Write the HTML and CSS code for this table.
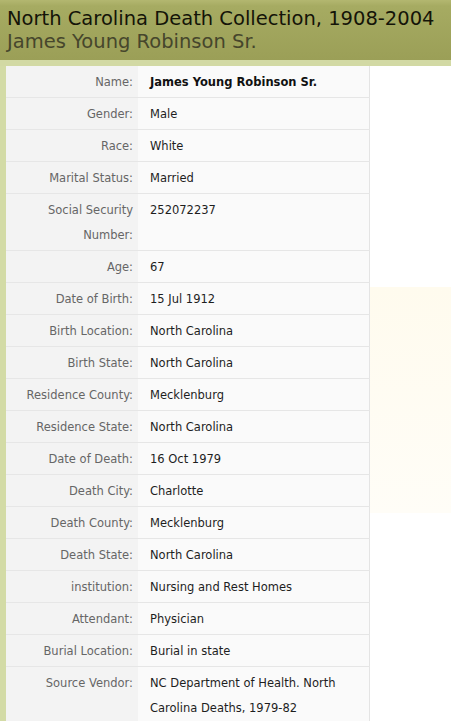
FILE: index.html
```html
<!DOCTYPE html>
<html>
<head>
<meta charset="utf-8">
<link rel="stylesheet" href="styles.css">
</head>
<body>
<header class="head">
  <h1 class="title">North Carolina Death Collection, 1908-2004</h1>
  <h2 class="subtitle">James Young Robinson Sr.</h2>
</header>
<div class="band"></div>
<div class="main">
  <table class="record">
    <tr><th>Name:</th><td class="strong">James Young Robinson Sr.</td></tr>
    <tr><th>Gender:</th><td>Male</td></tr>
    <tr><th>Race:</th><td>White</td></tr>
    <tr><th>Marital Status:</th><td>Married</td></tr>
    <tr><th>Social Security<br>Number:</th><td>252072237</td></tr>
    <tr><th>Age:</th><td>67</td></tr>
    <tr><th>Date of Birth:</th><td>15 Jul 1912</td></tr>
    <tr><th>Birth Location:</th><td>North Carolina</td></tr>
    <tr><th>Birth State:</th><td>North Carolina</td></tr>
    <tr><th>Residence County:</th><td>Mecklenburg</td></tr>
    <tr><th>Residence State:</th><td>North Carolina</td></tr>
    <tr><th>Date of Death:</th><td>16 Oct 1979</td></tr>
    <tr><th>Death City:</th><td>Charlotte</td></tr>
    <tr><th>Death County:</th><td>Mecklenburg</td></tr>
    <tr><th>Death State:</th><td>North Carolina</td></tr>
    <tr><th>institution:</th><td>Nursing and Rest Homes</td></tr>
    <tr><th>Attendant:</th><td>Physician</td></tr>
    <tr><th>Burial Location:</th><td>Burial in state</td></tr>
    <tr><th>Source Vendor:</th><td>NC Department of Health. North Carolina Deaths, 1979-82</td></tr>
  </table>
  <aside class="side"></aside>
</div>
</body>
</html>
```
FILE: styles.css
```css
html, body {
  margin: 0;
  padding: 0;
  background: #ffffff;
}
body {
  font-family: "DejaVu Sans", Verdana, sans-serif;
  overflow: hidden;
}
.head {
  height: 60px;
  box-sizing: border-box;
  padding: 7px 0 0 7px;
  background: linear-gradient(#b3b770 0, #a6ab62 6px, #9b9f57 60px);
  white-space: nowrap;
}
.title {
  margin: 0;
  font-weight: normal;
  font-size: 19.5px;
  line-height: 23px;
  color: #141408;
}
.subtitle {
  margin: 0;
  font-weight: normal;
  font-size: 19.5px;
  line-height: 23px;
  color: #46462c;
}
.band {
  height: 6px;
  background: #d2d9a4;
}
.main {
  display: flex;
  align-items: flex-start;
  border-left: 6px solid #d3dba6;
}
.record {
  border-collapse: collapse;
  width: 364px;
  border-right: 1px solid #e4e4e4;
  font-size: 11.5px;
}
.record th,
.record td {
  line-height: 25px;
  padding: 4px 0 2px;
  border-bottom: 1px solid #e6e6e6;
  vertical-align: top;
}
.record th {
  width: 127px;
  padding-right: 5px;
  text-align: right;
  font-weight: normal;
  color: #666666;
  background: #f3f3f3;
  white-space: nowrap;
}
.record td {
  padding-left: 12px;
  color: #1e1e1e;
  background: #fafafa;
}
.record td.strong {
  font-weight: bold;
  color: #111111;
}
.side {
  flex: 1;
  margin-top: 221px;
  height: 226px;
  background: linear-gradient(#fffbee, #fffdf7);
}
```
